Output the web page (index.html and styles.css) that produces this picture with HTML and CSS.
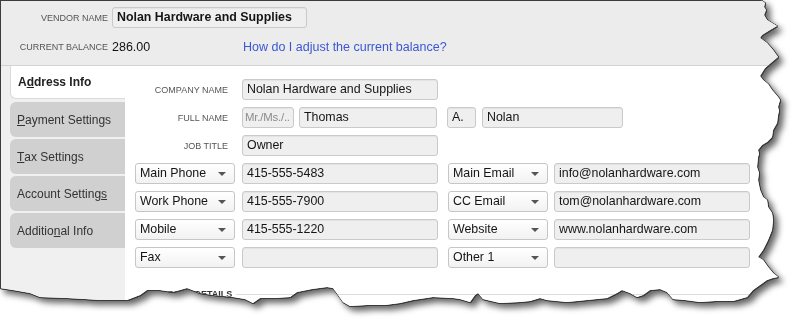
FILE: index.html
```html
<!DOCTYPE html>
<html lang="en">
<head>
<meta charset="utf-8">
<title>Vendor</title>
<link rel="stylesheet" href="styles.css">
</head>
<body>
<div class="stage">
  <div class="window">
    <header class="top">
      <div class="hrow">
        <span class="lbl hl">VENDOR NAME</span>
        <div class="field vendor">Nolan Hardware and Supplies</div>
      </div>
      <div class="hrow">
        <span class="lbl hl">CURRENT BALANCE</span>
        <span class="bal">286.00</span>
        <a class="help" href="#">How do I adjust the current balance?</a>
      </div>
    </header>
    <div class="body">
      <nav class="tabs">
        <div class="tab active">A<u>d</u>dress Info</div>
        <div class="tab"><u>P</u>ayment Settings</div>
        <div class="tab"><u>T</u>ax Settings</div>
        <div class="tab">Account Setting<u>s</u></div>
        <div class="tab">Additio<u>n</u>al Info</div>
      </nav>
      <main class="content">
        <div class="row">
          <span class="lbl flbl">COMPANY NAME</span>
          <div class="field w196">Nolan Hardware and Supplies</div>
        </div>
        <div class="row">
          <span class="lbl flbl">FULL NAME</span>
          <div class="field w52 ph">Mr./Ms./..</div>
          <div class="field w138 g5">Thomas</div>
          <div class="field w29 g10">A.</div>
          <div class="field w141 g6">Nolan</div>
        </div>
        <div class="row">
          <span class="lbl flbl">JOB TITLE</span>
          <div class="field w196">Owner</div>
        </div>
        <div class="row">
          <div class="drop">Main Phone</div>
          <div class="field w196">415-555-5483</div>
          <div class="drop g10">Main Email</div>
          <div class="field w196 g6">info@nolanhardware.com</div>
        </div>
        <div class="row">
          <div class="drop">Work Phone</div>
          <div class="field w196">415-555-7900</div>
          <div class="drop g10">CC Email</div>
          <div class="field w196 g6">tom@nolanhardware.com</div>
        </div>
        <div class="row">
          <div class="drop">Mobile</div>
          <div class="field w196">415-555-1220</div>
          <div class="drop g10">Website</div>
          <div class="field w196 g6">www.nolanhardware.com</div>
        </div>
        <div class="row">
          <div class="drop">Fax</div>
          <div class="field w196"></div>
          <div class="drop g10">Other 1</div>
          <div class="field w196 g6"></div>
        </div>
        <div class="section">
          <span class="sec-title">ADDRESS DETAILS</span>
          <span class="sec-line"></span>
        </div>
      </main>
    </div>
  </div>
</div>
</body>
</html>
```

FILE: styles.css
```css
html, body {
  margin: 0;
  padding: 0;
  background: #ffffff;
}
body {
  font-family: "Liberation Sans", Arial, sans-serif;
  color: #1a1a1a;
  width: 803px;
  height: 332px;
  overflow: hidden;
}
.stage {
  width: 803px;
  height: 332px;
  filter:
    drop-shadow(1px 0 0 #3a3a3a)
    drop-shadow(0 1px 0 #3a3a3a)
    drop-shadow(4px 4px 3px rgba(0, 0, 0, 0.6));
}
.window {
  box-sizing: border-box;
  width: 803px;
  height: 332px;
  overflow: hidden;
  background: #ffffff;
  border-top: 1px solid #3c3c3c;
  border-left: 1px solid #3c3c3c;
  display: flex;
  flex-direction: column;
  clip-path: polygon(
    0px 0px, 761px 0px, 765px 3px, 764px 7px, 766px 10px, 764px 15px, 767px 20px,
    772px 23px, 777px 26px, 770px 30px, 762px 35px, 760px 38px, 767px 43px, 773px 50px,
    778px 57px, 772px 62px, 765px 68px, 760px 76px, 763px 80px, 768px 84px, 772px 90px,
    778px 97px, 780px 100px, 778px 107px, 779px 111px, 778px 115px, 777px 123px,
    773px 130px, 772px 137px, 767px 142px, 762px 145px, 758px 150px, 759px 154px,
    758px 157px, 757px 167px, 759px 173px, 758px 180px, 760px 190px, 763px 197px,
    767px 200px, 768px 207px, 772px 213px, 773px 220px, 772px 230px, 768px 240px,
    763px 250px, 758px 257px, 763px 260px, 768px 267px, 773px 273px, 778px 277px,
    773px 278px, 767px 280px, 760px 285px, 753px 290px, 747px 297px, 740px 299px,
    733px 301px, 715px 301px, 700px 302px, 685px 300px, 673px 299px, 667px 292px,
    660px 289px, 650px 290px, 643px 295px, 637px 297px, 630px 293px, 622px 290px,
    617px 293px, 607px 298px, 597px 299px, 587px 300px, 567px 302px, 547px 300px,
    540px 298px, 530px 301px, 520px 302px, 500px 303px, 483px 299px, 478px 293px,
    475px 295px, 470px 302px, 460px 299px, 453px 298px, 433px 297px, 413px 300px,
    400px 303px, 385px 305px, 367px 305px, 350px 306px, 343px 302px, 336px 292px,
    333px 288px, 327px 287px, 312px 289px, 297px 292px, 290px 297px, 275px 298px,
    260px 298px, 253px 303px, 245px 299px, 233px 297px, 213px 295px, 200px 293px,
    187px 288px, 180px 290px, 173px 292px, 160px 290px, 147px 290px, 140px 295px,
    127px 300px, 100px 300px, 85px 299px, 67px 298px, 40px 297px, 30px 293px,
    13px 290px, 0px 288px
  );
}

/* ---------- header ---------- */
.top {
  background: #ececec;
  border-bottom: 1px solid #d3d3d3;
  height: 65px;
  box-sizing: border-box;
  padding-top: 6px;
  display: flex;
  flex-direction: column;
  gap: 8px;
}
.hrow {
  display: flex;
  align-items: center;
  height: 21px;
}
.lbl {
  font-size: 9px;
  color: #555555;
  white-space: nowrap;
}
.hl {
  width: 107px;
  text-align: right;
  margin-right: 4px;
  flex: none;
}
.vendor {
  width: 195px;
  font-weight: bold;
  font-size: 12px;
}
.bal {
  font-size: 12.5px;
  color: #111111;
  width: 131px;
  flex: none;
}
.help {
  font-size: 12.5px;
  color: #3a57d4;
  text-decoration: none;
}

/* ---------- body ---------- */
.body {
  flex: 1;
  display: flex;
  min-height: 0;
}
.tabs {
  width: 124px;
  flex: none;
  background: #f0f0f0;
  padding-left: 9px;
  box-sizing: border-box;
  display: flex;
  flex-direction: column;
  gap: 2px;
}
.tab {
  height: 35px;
  background: #d0d0d0;
  border-radius: 6px 0 0 6px;
  font-size: 12px;
  color: #333333;
  padding-left: 7px;
  display: flex;
  align-items: center;
  white-space: nowrap;
}
.tab.active {
  height: 33px;
  background: #ffffff;
  font-weight: bold;
  color: #222222;
  border: 1px solid #dadada;
  border-right: none;
  border-top: none;
  box-sizing: border-box;
  border-radius: 0 0 0 6px;
  margin-bottom: 1px;
}
.content {
  flex: 1;
  background: #ffffff;
  padding: 13px 0 0 10px;
  display: flex;
  flex-direction: column;
  gap: 7px;
}
.row {
  display: flex;
  align-items: center;
  height: 21px;
}
.flbl {
  width: 100px;
  box-sizing: border-box;
  text-align: right;
  padding-right: 7px;
  flex: none;
  margin-right: 7px;
}
.field {
  box-sizing: border-box;
  height: 21px;
  line-height: 19px;
  background: #efefef;
  border: 1px solid #cacaca;
  border-radius: 3px;
  box-shadow: inset 0 1px 1px rgba(0, 0, 0, 0.05);
  padding: 0 4px;
  font-size: 12.4px;
  color: #151515;
  white-space: nowrap;
  overflow: hidden;
  flex: none;
}
.field.ph {
  color: #8c8c8c;
  padding: 0 2px;
  font-size: 11.4px;
  letter-spacing: -0.2px;
}
.w196 { width: 196px; }
.w52 { width: 52px; }
.w138 { width: 138px; }
.w29 { width: 29px; }
.w141 { width: 141px; }
.g5 { margin-left: 5px; }
.g6 { margin-left: 6px; }
.g10 { margin-left: 10px; }

.drop {
  box-sizing: border-box;
  width: 100px;
  height: 21px;
  line-height: 19px;
  background: linear-gradient(#ffffff, #f2f2f2);
  border: 1px solid #c6c6c6;
  border-radius: 3px;
  padding-left: 4px;
  font-size: 12.4px;
  color: #151515;
  white-space: nowrap;
  flex: none;
  margin-right: 7px;
  display: flex;
  align-items: center;
  justify-content: space-between;
}
.drop.g10 { margin-right: 0; }
.drop::after {
  content: "";
  width: 0;
  height: 0;
  border-left: 4px solid transparent;
  border-right: 4px solid transparent;
  border-top: 4px solid #555555;
  margin-right: 8px;
}

.section {
  margin-top: 14px;
  margin-left: 13px;
  display: flex;
  align-items: center;
  gap: 4px;
  width: 601px;
}
.sec-title {
  font-size: 9px;
  font-weight: bold;
  color: #333333;
  white-space: nowrap;
}
.sec-line {
  flex: 1;
  border-top: 1px solid #dcdcdc;
}
```
